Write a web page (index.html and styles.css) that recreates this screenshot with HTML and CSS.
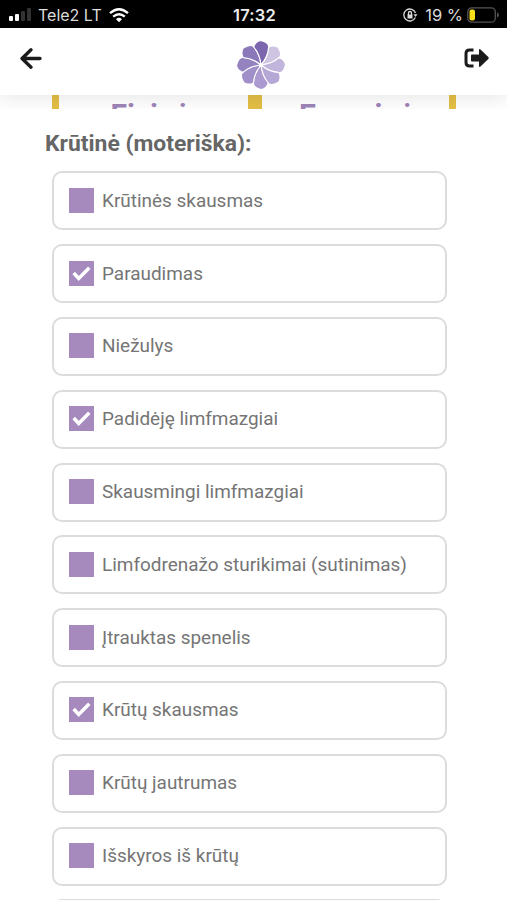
FILE: index.html
```html
<!DOCTYPE html>
<html lang="lt">
<head>
<meta charset="utf-8">
<title>Simptomai</title>
<link rel="stylesheet" href="styles.css">
</head>
<body>
<div class="status">
  <div class="status-left">
    <svg width="23" height="14" viewBox="0 0 23 14"><rect y="8" width="4" height="5" rx="1" fill="#fff"/><rect x="6" y="6" width="4" height="7" rx="1" fill="#fff"/><rect x="12" y="3" width="4" height="10" rx="1" fill="#333"/><rect x="18" y="0" width="4" height="13" rx="1" fill="#333"/></svg>
    <span class="carrier">Tele2 LT</span>
    <svg class="wifi" width="20" height="15" viewBox="0 0 20 15" fill="none" stroke="#fff" stroke-width="2.4"><path d="M1 5.2Q10-2.6 19 5.2M4.200 8.700Q10 3.800 15.800 8.700"/><path d="M7 11.200Q10 8.500 13 11.200L10 14.300z" fill="#fff" stroke="none"/></svg>
  </div>
  <span class="time">17:32</span>
  <div class="status-right">
    <svg width="15" height="14" viewBox="0 0 15 14" fill="none" stroke="#ddd" stroke-width="1.300"><path d="M12.300 9.500A6 6 0 1 1 12.500 5"/><path d="M10.500 6.300h4l-2 2.700z" fill="#ddd" stroke="none"/><path d="M4.500 6.500h5v4h-5z" fill="#ddd" stroke="none"/><path d="M5.500 7V5a1.500 1.500 0 0 1 3 0v2"/></svg>
    <span class="percent">19 %</span>
    <svg width="33" height="16" viewBox="0 0 33 16"><rect x=".8" y=".8" width="27.500" height="14.400" rx="4" fill="none" stroke="#555" stroke-width="1.300"/><rect x="2.500" y="2.500" width="5.500" height="11" rx="2" fill="#fbe11b"/><path d="M30 5.500q2 .8 2 2.500t-2 2.500z" fill="#555"/></svg>
  </div>
</div>
<header class="header">
  <svg class="back" width="22" height="21" viewBox="0 0 22 21" fill="none" stroke="#1b1b1b" stroke-width="3.300" stroke-linecap="round" stroke-linejoin="round"><path d="M11 1.800L2 10.500l9 8.700M2.500 10.500H20"/></svg>
  <svg class="logo" width="50" height="50" viewBox="-25 -25 50 50" stroke="#fff" stroke-width="1.100" stroke-linejoin="round">
    <defs><path id="petal" d="M0 0Q-1-11-7.300-18C-6-22-3-24-.5-24.500C4-23.500 8-21 7.570-17.900Q7.070-8.500 0 0z"/></defs>
    <use href="#petal" transform="rotate(45)" fill="#cfc4e2"/>
    <use href="#petal" transform="rotate(90)" fill="#c2b5dc"/>
    <use href="#petal" transform="rotate(135)" fill="#b5a7d6"/>
    <use href="#petal" transform="rotate(180)" fill="#aa9acf"/>
    <use href="#petal" transform="rotate(225)" fill="#a08fc8"/>
    <use href="#petal" transform="rotate(270)" fill="#9583c0"/>
    <use href="#petal" transform="rotate(315)" fill="#8b78b9"/>
    <use href="#petal" fill="#7c66ad"/>
    <circle r="2" fill="#fff" stroke="none"/>
  </svg>
  <svg class="exit" width="25" height="20" viewBox="0 0 25 20"><path d="M9.500 2H5.500Q2 2 2 5.500v9Q2 18 5.500 18h4" fill="none" stroke="#1b1b1b" stroke-width="3"/><path d="M8 6.500h7V2q0-1.800 1.500-.6L24.300 9q.9 1 0 2l-7.800 7.600q-1.500 1.200-1.500-.6v-4.500H8q-1 0-1-1v-5q0-1 1-1z" fill="#1b1b1b"/></svg>
</header>
<div class="tabs">
  <div class="tab">Fizinė</div>
  <div class="tab">Emocinė</div>
</div>
<main class="main">
  <h1 class="title">Krūtinė (moteriška):</h1>
  <div class="list">
    <div class="row"><span class="box"></span>Krūtinės skausmas</div>
    <div class="row"><span class="box"><svg viewBox="0 0 24 24"><path d="M4.500 11.500l4.800 5.300L19.500 6.500"/></svg></span>Paraudimas</div>
    <div class="row"><span class="box"></span>Niežulys</div>
    <div class="row"><span class="box"><svg viewBox="0 0 24 24"><path d="M4.500 11.500l4.800 5.300L19.500 6.500"/></svg></span>Padidėję limfmazgiai</div>
    <div class="row"><span class="box"></span>Skausmingi limfmazgiai</div>
    <div class="row"><span class="box"></span>Limfodrenažo sturikimai (sutinimas)</div>
    <div class="row"><span class="box"></span>Įtrauktas spenelis</div>
    <div class="row"><span class="box"><svg viewBox="0 0 24 24"><path d="M4.500 11.500l4.800 5.300L19.500 6.500"/></svg></span>Krūtų skausmas</div>
    <div class="row"><span class="box"></span>Krūtų jautrumas</div>
    <div class="row"><span class="box"></span>Išskyros iš krūtų</div>
    <div class="row"></div>
  </div>
</main>
</body>
</html>
```
FILE: styles.css
```css
* { box-sizing: border-box; }
body {
  margin: 0;
  height: 900px;
  overflow: hidden;
  display: flex;
  flex-direction: column;
  background: #fff;
  font-family: Roboto, sans-serif;
}
svg { display: block; flex: none; }
.status {
  flex: none;
  height: 28px;
  padding: 2px 7px 0 9px;
  display: grid;
  grid-template-columns: 1fr auto 1fr;
  align-items: center;
  background: #000;
  color: #ddd;
  font: 17px/24px Inter, sans-serif;
}
.status-left, .status-right { display: flex; align-items: center; white-space: nowrap; }
.status-right { justify-content: flex-end; }
.carrier { margin-left: 6px; font-size: 16px; }
.wifi { margin-left: 7px; }
.time { color: #eee; font-weight: 600; font-size: 16.5px; letter-spacing: .2px; }
.percent { margin: 0 4px 0 7px; font-size: 16.5px; }
.header {
  flex: none;
  position: relative;
  height: 67px;
  padding: 0 18px 0 20px;
  display: grid;
  grid-template-columns: 1fr auto 1fr;
  background: #fff;
  box-shadow: 0 2px 20px rgba(0, 0, 0, .11);
}
.back { margin-top: 20px; }
.logo { margin: 12px 0 0 12px; }
.exit { margin-top: 20px; justify-self: end; }
.tabs {
  flex: none;
  height: 14px;
  margin: 0 51px 0 52px;
  overflow: hidden;
  display: flex;
  border: solid #e4bf45;
  border-width: 0 7px;
}
.tab {
  flex: 1;
  padding: 2px 5px 0 0;
  text-align: center;
  font: bold 30px/36px Roboto, sans-serif;
  color: #9e85b9;
}
.tab + .tab { padding: 2px 0 0 4px; border-left: 14px solid #e4bf45; }
.main {
  flex: 1;
  position: relative;
  min-height: 0;
  overflow: hidden;
  padding: 20px 60px 0 45px;
  background: #fff;
}
.title { margin: 0; font: bold 22.900px/30px Roboto, sans-serif; color: #666; }
.list { margin: 12.400px 0 0 7px; display: grid; gap: 13.800px; }
.row {
  height: 59px;
  padding: 0 15px 1px;
  display: flex;
  align-items: center;
  gap: 8px;
  border: 2px solid #dcdcdc;
  border-radius: 10px;
  font-size: 18.950px;
  color: #757575;
  white-space: nowrap;
}
.box { width: 25px; height: 25px; background: #a68abd; }
.box path { fill: none; stroke: #fff; stroke-width: 3.300; }
```
